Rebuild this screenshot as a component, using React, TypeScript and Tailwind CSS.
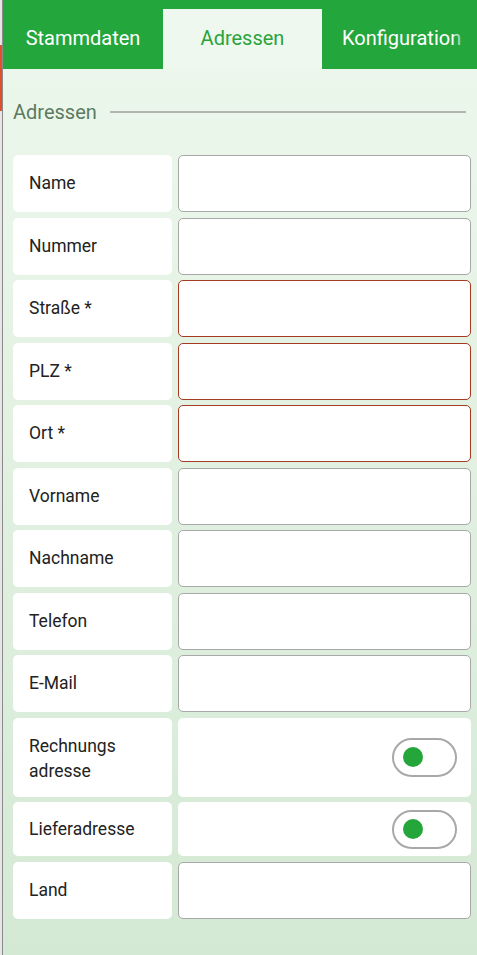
import React from "react";

type Field = {
  label: string;
  required?: boolean;
  toggle?: boolean;
  tall?: boolean;
};

const fields: Field[] = [
  { label: "Name" },
  { label: "Nummer" },
  { label: "Straße *", required: true },
  { label: "PLZ *", required: true },
  { label: "Ort *", required: true },
  { label: "Vorname" },
  { label: "Nachname" },
  { label: "Telefon" },
  { label: "E-Mail" },
  { label: "Rechnungs adresse", toggle: true, tall: true },
  { label: "Lieferadresse", toggle: true },
  { label: "Land" },
];

const Toggle: React.FC = () => (
  <div className="w-[65px] h-[39px] rounded-full border-2 border-[#a8a8a8] bg-white flex items-center px-[9px]">
    <div className="w-[20px] h-[20px] rounded-full bg-[#24a63a]" />
  </div>
);

const Row: React.FC<{ field: Field }> = ({ field }) => {
  const height = field.tall ? "h-[79px]" : field.toggle ? "h-[54px]" : "h-[57px]";
  return (
    <div className={`flex gap-[6px] ${height}`}>
      <div className="w-[159px] shrink-0 bg-white rounded-[5px] flex items-center pl-4 pr-2">
        <span className="text-[17.5px] leading-[25px] text-[#222]">
          {field.label === "Rechnungs adresse" ? (
            <span className="block pt-[3px]">
              Rechnungs
              <br />
              adresse
            </span>
          ) : (
            field.label
          )}
        </span>
      </div>
      {field.toggle ? (
        <div className="flex-1 bg-white rounded-[5px] flex items-center justify-end pr-[14px]">
          <Toggle />
        </div>
      ) : (
        <div
          className={`flex-1 bg-white rounded-[5px] border-[1.5px] ${
            field.required ? "border-[#a63a22]" : "border-[#a8a8a8]"
          }`}
        />
      )}
    </div>
  );
};

export default function App() {
  return (
    <div
      className="flex w-[477px] h-[955px] overflow-hidden"
      style={{ fontFamily: "Roboto, 'Noto Sans', sans-serif" }}
    >
      <div className="w-[2px] shrink-0 bg-[#e6e6e6] flex flex-col">
        <div className="h-[45px]" />
        <div className="h-[66px] bg-[#e0502a]" />
      </div>
      <div className="w-[1px] shrink-0 bg-[#8a8a8a]" />
      <div className="flex-1 flex flex-col bg-gradient-to-b from-[#eef8ee] to-[#d4e9d4]">
        <div className="h-[69px] bg-[#23a63b] flex items-end relative">
          <div className="w-[160px] h-[60px] flex items-center justify-center text-white text-[20px] pb-[3px]">
            Stammdaten
          </div>
          <div className="w-[159px] h-[60px] bg-[#eef8ee] flex items-center justify-center text-[#2aa33c] text-[20px] pb-[3px]">
            Adressen
          </div>
          <div className="flex-1 h-[60px] flex items-center pl-[20px] text-white text-[20px] pb-[3px] whitespace-nowrap overflow-hidden">
            Konfiguration
          </div>
          <div className="absolute right-0 top-0 h-full w-[24px] bg-gradient-to-r from-transparent via-[#23a63b]/80 to-[#23a63b]" />
        </div>
        <div className="flex items-center gap-[13px] pl-[10px] pr-[11px] mt-[28px]">
          <span className="text-[20px] text-[#5b7a60]">Adressen</span>
          <div className="flex-1 h-[2px] bg-[#b0b5b0]" />
        </div>
        <div className="flex flex-col gap-[5.5px] mt-[28px] pl-[10px] pr-[6px]">
          {fields.map((f) => (
            <Row key={f.label} field={f} />
          ))}
        </div>
      </div>
    </div>
  );
}
